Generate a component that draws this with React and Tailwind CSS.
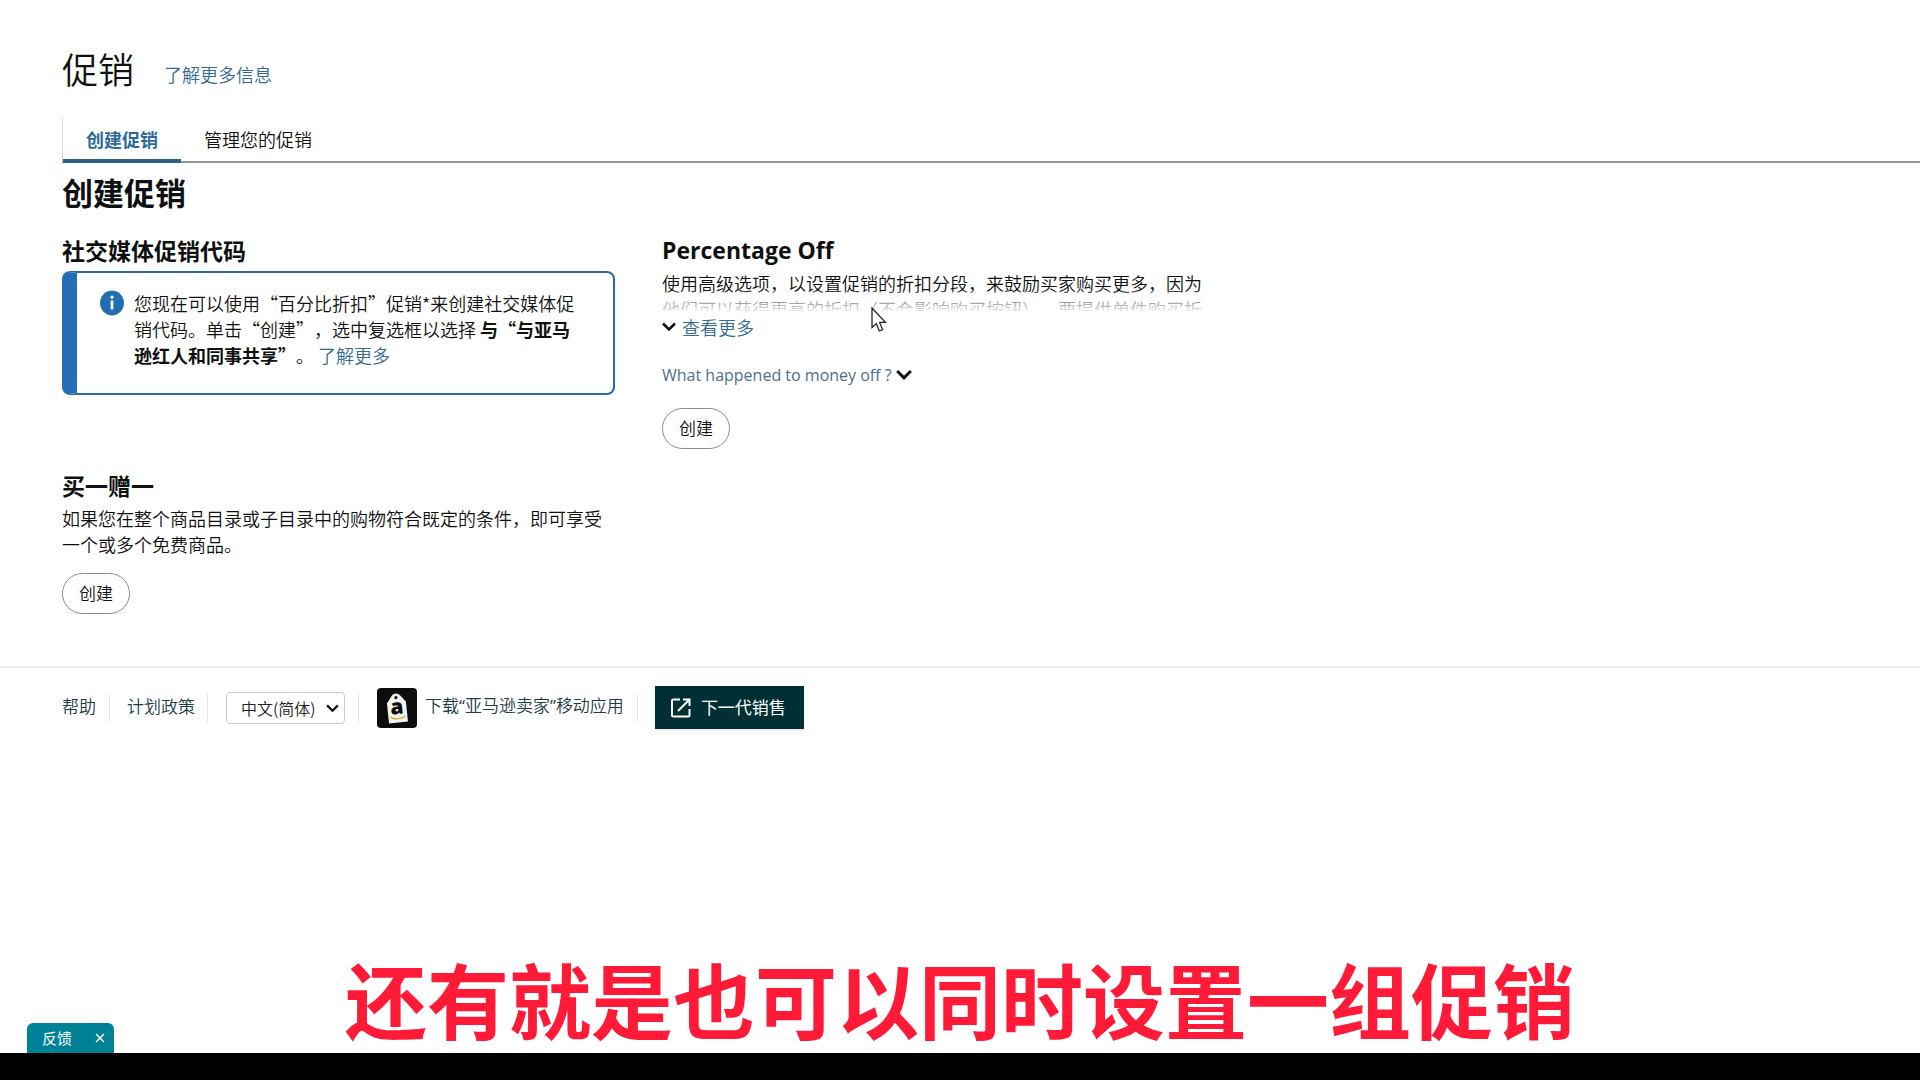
import { useState } from "react";

const Chevron = ({ className }) => (
  <svg viewBox="0 0 14 10" fill="none" stroke="currentColor" strokeWidth="2.5" className={className} aria-hidden="true">
    <path d="M1 1.5 L7 7.5 L13 1.5" />
  </svg>
);

const InfoIcon = () => (
  <svg viewBox="0 0 24 26" className="mt-3 h-[26px] w-6 shrink-0" aria-hidden="true">
    <ellipse cx="12" cy="13" rx="12" ry="12.5" fill="#1f6fb2" />
    <rect x="10.7" y="10.5" width="2.6" height="9" fill="#fff" />
    <circle cx="12" cy="7.2" r="1.6" fill="#fff" />
  </svg>
);

const SellerAppIcon = () => (
  <svg viewBox="0 0 40 40" className="h-10 w-10 shrink-0" aria-hidden="true">
    <rect width="40" height="40" rx="4" fill="#0d0d0f" />
    <g transform="rotate(-6 20 20)">
      <path d="M15.5 8 L17.5 6 H22.5 L24.5 8 L29.5 14.5 V34.5 H10.5 V14.5 Z" fill="#f4f4f2" />
      <circle cx="20" cy="9.5" r="1.6" fill="#0d0d0f" />
      <path d="M20 8 V5" stroke="#cfcfcf" strokeWidth="1.2" />
      <path d="M12.5 28.5 C16 31.5 23 31.5 27.5 29" fill="none" stroke="#d9b44a" strokeWidth="1.6" />
      <text x="20" y="26" textAnchor="middle" fontSize="21" fontWeight="800" fontFamily="Open Sans, sans-serif" fill="#0d0d0f">a</text>
    </g>
  </svg>
);

const ExternalIcon = () => (
  <svg viewBox="0 0 20 20" fill="none" stroke="currentColor" strokeWidth="2" className="h-5 w-5" aria-hidden="true">
    <path d="M9 1.5 H2.5 Q1 1.5 1 3 V17 Q1 18.5 2.5 18.5 H17 Q18.5 18.5 18.5 17 V11" />
    <path d="M12 1.5 H18.5 V8 M18.5 1.5 L7 13" />
  </svg>
);

const CreateButton = ({ className }) => (
  <button
    type="button"
    className={`h-[41px] rounded-full border border-[#888c8c] bg-white px-4 pb-[2px] text-[17px] leading-6 cursor-pointer ${className}`}
  >
    创建
  </button>
);

const Divider = () => <span className="h-7 w-px bg-[#e3e5e5]" />;

const App = () => {
  const [expanded, setExpanded] = useState(false);
  const [moneyOff, setMoneyOff] = useState(false);
  const [feedback, setFeedback] = useState(true);
  const [lang, setLang] = useState("zh");

  return (
    <div className="relative flex min-h-screen flex-col overflow-x-hidden bg-white font-['Noto_Sans_CJK_SC',sans-serif] text-lg leading-[26px] font-[350] text-[#0f1111] [text-spacing-trim:space-all]">
      <header className="pt-[46px] pl-[62px]">
        <div className="flex items-center gap-[30px]">
          <h1 className="text-4xl leading-[44px]">促销</h1>
          <a href="#learn" className="pt-3 text-[#336b91]">了解更多信息</a>
        </div>
        <nav className="mt-7 flex border-b-2 border-l border-b-[#949a9b] border-l-[#d5d9d9]">
          <a href="#create" className="-mb-[2px] border-b-4 border-[#2b6282] px-[23px] pt-2 pb-[7px] font-bold text-[#2d6a98]">创建促销</a>
          <a href="#manage" className="px-[23px] pt-2">管理您的促销</a>
        </nav>
      </header>

      <main className="px-[62px] pt-[9px] pb-[52px]">
        <h2 className="text-[31px] leading-10 font-bold">创建促销</h2>

        <div className="mt-[23px] grid max-w-[1153px] grid-cols-2 gap-x-[47px] gap-y-[21px]">
          <section>
            <h3 className="text-[23px] leading-[30px] font-bold">社交媒体促销代码</h3>
            <div className="mt-[6px] flex gap-[10px] rounded-lg border-2 border-l-[15px] border-[#2b6ba3] border-l-[#256eb5] pt-[5px] pr-8 pb-[25px] pl-[23px]">
              <InfoIcon />
              <p className="pt-3">
                您现在可以使用“百分比折扣”促销*来创建社交媒体促销代码。单击“创建”，选中复选框以选择 <b>与“与亚马逊红人和同事共享”</b>。
                <a href="#social" className="ml-1 text-[#336b91]">了解更多</a>
              </p>
            </div>
          </section>

          <section>
            <h3 className="font-['Open_Sans',sans-serif] text-[23px] leading-[30px] font-bold">Percentage Off</h3>
            <div className={expanded ? "mt-[5px]" : "relative mt-[5px] h-[41px] overflow-hidden"}>
              <p className="pr-2">
                使用高级选项，以设置促销的折扣分段，来鼓励买家购买更多，因为他们可以获得更高的折扣（不会影响购买按钮）。要提供单件购买折扣
              </p>
              {!expanded && <div className="absolute inset-x-0 bottom-0 h-5 bg-linear-to-b from-white/20 to-white/90" />}
            </div>
            <button type="button" onClick={() => setExpanded(!expanded)} className="mt-[3px] flex items-center gap-[6px] text-[#336b91] cursor-pointer">
              <Chevron className="h-[10px] w-[14px] text-[#0f1111]" />
              查看更多
            </button>
            <button type="button" onClick={() => setMoneyOff(!moneyOff)} className="mt-[22px] flex items-center gap-1 font-['Open_Sans',sans-serif] text-base leading-[26px] font-normal text-[#4b6f8c] cursor-pointer">
              What happened to money off ?
              <Chevron className="h-3 w-4 text-[#0f1111]" />
            </button>
            <CreateButton className="mt-5" />
          </section>

          <section>
            <h3 className="text-[23px] leading-[30px] font-bold">买一赠一</h3>
            <p className="mt-[5px]">
              如果您在整个商品目录或子目录中的购物符合既定的条件，即可享受一个或多个免费商品。
            </p>
            <CreateButton className="mt-4" />
          </section>
        </div>
      </main>

      <footer className="flex items-center border-t-2 border-[#eaeded] pt-[18px] pl-[62px] text-[17px] text-[#1d3d44]">
        <a href="#help" className="mr-[13px] pb-1">帮助</a>
        <Divider />
        <a href="#policy" className="mr-3 ml-[17px] pb-1">计划政策</a>
        <Divider />
        <div className="relative mr-[13px] ml-[18px]">
          <select
            aria-label="语言"
            value={lang}
            onChange={(e) => setLang(e.target.value)}
            className="block h-8 w-[119px] appearance-none rounded border border-[#c8cccc] bg-white pl-[14px] text-base leading-6 text-[#222]"
          >
            <option value="zh">中文(简体)</option>
            <option value="en">English</option>
          </select>
          <Chevron className="pointer-events-none absolute top-3 right-[6px] h-[9px] w-[13px] text-[#111]" />
        </div>
        <Divider />
        <a href="#app" className="mr-[13px] ml-[18px] flex items-center gap-2">
          <SellerAppIcon />
          <span className="pb-1">下载<span className="font-['Open_Sans',sans-serif] font-normal">“</span>亚马逊卖家<span className="font-['Open_Sans',sans-serif] font-normal">”</span>移动应用</span>
        </a>
        <Divider />
        <a href="#next" className="ml-[17px] flex h-[43px] items-center gap-[10px] bg-[#002f36] pr-[18px] pl-4 font-normal text-white shadow-sm">
          <ExternalIcon />
          <span className="pb-[2px]">下一代销售</span>
        </a>
      </footer>

      <div className="mt-auto">
        <p className="pb-[10px] text-center text-[82px] leading-[90px] font-bold text-[#ff1a38]">还有就是也可以同时设置一组促销</p>
        <div className="h-[27px] bg-black" />
      </div>

      {feedback && (
        <div className="absolute bottom-[27px] left-[27px] flex h-[30px] w-[87px] items-center justify-between rounded-t-md bg-[#008296] pr-[9px] pl-[15px] text-white">
          <button type="button" className="text-[15px] leading-5 font-normal cursor-pointer">反馈</button>
          <button type="button" aria-label="关闭" onClick={() => setFeedback(false)} className="cursor-pointer">
            <svg viewBox="0 0 10 10" stroke="currentColor" strokeWidth="1.5" className="h-[10px] w-[10px]">
              <path d="M1 1 L9 9 M9 1 L1 9" />
            </svg>
          </button>
        </div>
      )}

      <svg viewBox="0 0 16 26" className="pointer-events-none absolute top-[307px] left-[871px] h-[26px] w-4" aria-hidden="true">
        <path d="M1 1 V20.5 L5.3 16.5 L8.3 24 L11.6 22.6 L8.6 15.4 H14.4 Z" fill="#fff" stroke="#222" strokeWidth="1.3" />
      </svg>
    </div>
  );
};

export default App;
